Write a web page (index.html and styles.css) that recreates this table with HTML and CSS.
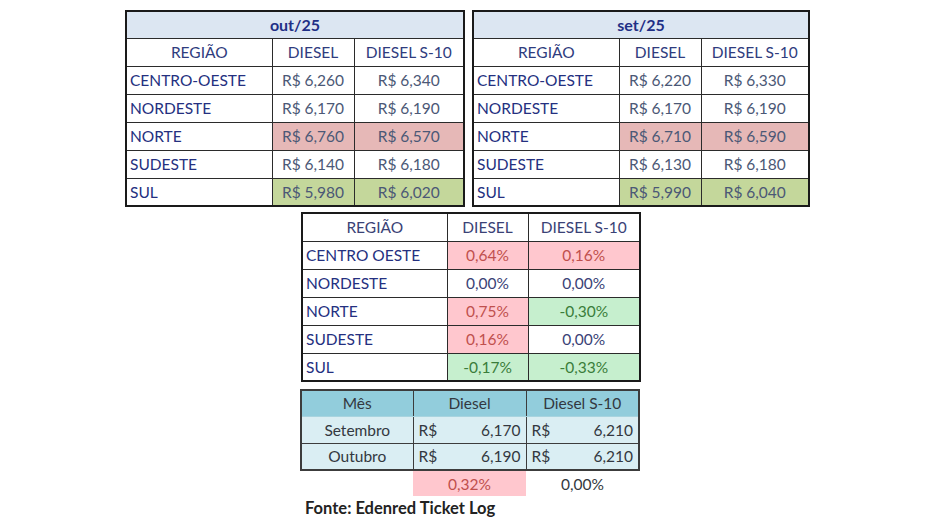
FILE: index.html
```html
<!DOCTYPE html>
<html lang="pt-BR">
<head>
<meta charset="utf-8">
<title>Preço do diesel</title>
<link rel="stylesheet" href="styles.css">
</head>
<body>
<div class="page">
  <div class="top-row">
    <table class="price left">
      <colgroup><col class="c1"><col class="c2"><col class="c3"></colgroup>
      <tr class="title"><th colspan="3">out/25</th></tr>
      <tr class="head"><td>REGIÃO</td><td>DIESEL</td><td>DIESEL S-10</td></tr>
      <tr><td class="reg">CENTRO-OESTE</td><td>R$ 6,260</td><td>R$ 6,340</td></tr>
      <tr><td class="reg">NORDESTE</td><td>R$ 6,170</td><td>R$ 6,190</td></tr>
      <tr><td class="reg">NORTE</td><td class="hi">R$ 6,760</td><td class="hi">R$ 6,570</td></tr>
      <tr><td class="reg">SUDESTE</td><td>R$ 6,140</td><td>R$ 6,180</td></tr>
      <tr><td class="reg">SUL</td><td class="lo">R$ 5,980</td><td class="lo">R$ 6,020</td></tr>
    </table>
    <table class="price right">
      <colgroup><col class="c1"><col class="c2"><col class="c3"></colgroup>
      <tr class="title"><th colspan="3">set/25</th></tr>
      <tr class="head"><td>REGIÃO</td><td>DIESEL</td><td>DIESEL S-10</td></tr>
      <tr><td class="reg">CENTRO-OESTE</td><td>R$ 6,220</td><td>R$ 6,330</td></tr>
      <tr><td class="reg">NORDESTE</td><td>R$ 6,170</td><td>R$ 6,190</td></tr>
      <tr><td class="reg">NORTE</td><td class="hi">R$ 6,710</td><td class="hi">R$ 6,590</td></tr>
      <tr><td class="reg">SUDESTE</td><td>R$ 6,130</td><td>R$ 6,180</td></tr>
      <tr><td class="reg">SUL</td><td class="lo">R$ 5,990</td><td class="lo">R$ 6,040</td></tr>
    </table>
  </div>

  <table class="var">
    <colgroup><col class="v1"><col class="v2"><col class="v3"></colgroup>
    <tr class="head"><td>REGIÃO</td><td>DIESEL</td><td>DIESEL S-10</td></tr>
    <tr><td class="reg">CENTRO OESTE</td><td class="up">0,64%</td><td class="up">0,16%</td></tr>
    <tr><td class="reg">NORDESTE</td><td>0,00%</td><td>0,00%</td></tr>
    <tr><td class="reg">NORTE</td><td class="up">0,75%</td><td class="down">-0,30%</td></tr>
    <tr><td class="reg">SUDESTE</td><td class="up">0,16%</td><td>0,00%</td></tr>
    <tr><td class="reg">SUL</td><td class="down">-0,17%</td><td class="down">-0,33%</td></tr>
  </table>

  <table class="avg">
    <colgroup><col class="a1"><col class="a2"><col class="a3"></colgroup>
    <tr class="ahead"><td>Mês</td><td>Diesel</td><td>Diesel S-10</td></tr>
    <tr class="arow"><td>Setembro</td><td><span class="acc"><span>R$</span><span>6,170</span></span></td><td><span class="acc"><span>R$</span><span>6,210</span></span></td></tr>
    <tr class="arow"><td>Outubro</td><td><span class="acc"><span>R$</span><span>6,190</span></span></td><td><span class="acc"><span>R$</span><span>6,210</span></span></td></tr>
  </table>
  <div class="avg-var">
    <div class="cell empty"></div>
    <div class="cell up">0,32%</div>
    <div class="cell">0,00%</div>
  </div>
  <p class="source">Fonte: Edenred Ticket Log</p>
</div>
</body>
</html>
```
FILE: styles.css
```css
html, body {
  margin: 0;
  padding: 0;
  background: #ffffff;
}

.page {
  width: 940px;
  height: 530px;
  padding: 10px 0 0 125px;
  box-sizing: border-box;
  font-family: "Lato", "Open Sans", sans-serif;
  font-size: 15.5px;
  overflow: hidden;
}

.top-row {
  display: flex;
  gap: 7px;
  align-items: flex-start;
}

table {
  border-collapse: collapse;
  table-layout: fixed;
}

td, th {
  padding: 0 3px;
  white-space: nowrap;
  overflow: hidden;
}

.price {
  border: 2px solid #1a1a1a;
}

.price.left { width: 340px; }
.price.right { width: 338px; }

.price .c1 { width: 146px; }
.price .c2 { width: 82px; }
.price .c3 { width: auto; }

.price tr { height: 28px; }
.price tr.title { height: 27px; }

.price td, .price th {
  border: 1px solid #2b2b2b;
  text-align: center;
  color: #4b5876;
}

.price .title th {
  background: #dce6f2;
  color: #1f2f86;
  font-weight: 700;
  font-size: 16px;
  border-bottom: 1px solid #2b2b2b;
}

.head td {
  color: #2f3c7e;
}

td.reg {
  text-align: left;
  color: #243080;
}

.price .hi { background: #e6b8b7; }
.price .lo { background: #c4d79b; }

.var {
  margin: 5px 0 0 176px;
  border: 2px solid #1a1a1a;
  width: 338px;
}

.var .v1 { width: 145px; }
.var .v2 { width: 81px; }
.var .v3 { width: 112px; }

.var tr { height: 28px; }

.var td {
  border: 1px solid #2b2b2b;
  text-align: center;
  color: #3a4276;
}

.var td.reg { text-align: left; color: #243080; }

.var .up {
  background: #ffc7ce;
  color: #c0504d;
}

.var .down {
  background: #c6efce;
  color: #3a7d3a;
}

.avg {
  margin: 7px 0 0 175px;
  border: 2px solid #3c3c3c;
  width: 338px;
}

.avg .a1 { width: 112px; }
.avg .a2 { width: 113px; }
.avg .a3 { width: 113px; }

.avg td {
  border-left: 1px solid #3c3c3c;
  border-right: 1px solid #3c3c3c;
  text-align: center;
  color: #333840;
  padding: 0 5px;
}

.ahead {
  height: 26px;
  background: #92cddc;
}

.ahead td {
  border-bottom: 1px solid #a8d4df;
}

.arow {
  height: 27px;
  background: #daeef3;
}

.arow + .arow td {
  border-top: 1px solid #3c3c3c;
}

.acc {
  display: flex;
  justify-content: space-between;
}

.avg-var {
  display: grid;
  grid-template-columns: 113px 113px 113px;
  margin-left: 175px;
  height: 25px;
}

.avg-var .cell {
  display: flex;
  align-items: center;
  justify-content: center;
  color: #333840;
}

.avg-var .up {
  background: #ffc7ce;
  color: #c0504d;
}

.source {
  margin: 2px 0 0 180px;
  font-family: "Lato", "Open Sans", sans-serif;
  font-weight: 700;
  font-size: 16.5px;
  color: #222222;
}
```
